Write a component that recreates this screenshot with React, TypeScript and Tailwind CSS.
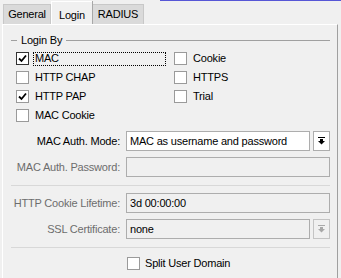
import React from 'react'

const Check = ({ checked, dark }: { checked?: boolean; dark?: boolean }) => (
    <span className={`flex h-[13px] w-[13px] shrink-0 items-center justify-center border bg-white ${dark ? 'border-[#333333]' : 'border-[#9a9a9a]'}`}>
        {checked && (
            <svg width="11" height="11" viewBox="0 0 11 11">
                <polyline points="2,5.5 4.5,8 9,2.5" fill="none" stroke="#000" strokeWidth="1.8" />
            </svg>
        )}
    </span>
)

const CheckRow = ({ label, checked, focus }: { label: string; checked?: boolean; focus?: boolean }) => (
    <div className="flex h-[19px] items-center gap-[4px]">
        <Check checked={checked} dark={focus} />
        {focus ? (
            <span className="flex h-[14px] w-[133px] items-center border border-dotted border-black pl-[1px]">{label}</span>
        ) : (
            <span className="pl-[2px]">{label}</span>
        )}
    </div>
)

const DropBtn = ({ disabled }: { disabled?: boolean }) => (
    <div className={`flex h-[20px] w-[17px] items-center justify-center border ${disabled ? 'border-[#c4c4c4]' : 'border-[#adadad] bg-white'}`}>
        <svg width="9" height="9" viewBox="0 0 9 9" fill={disabled ? '#a8a8a8' : '#000'}>
            <rect x="1" y="0" width="7" height="1" />
            <rect x="3" y="2" width="3" height="2" />
            <polygon points="1,4 8,4 4.5,7.5" />
        </svg>
    </div>
)

const Label = ({ text, disabled }: { text: string; disabled?: boolean }) => (
    <span className={`w-[109px] shrink-0 text-right ${disabled ? 'text-[#6d6d6d]' : 'text-black'}`}>{text}</span>
)

const App = () => {
    return (
        <div
            className="relative h-[278px] w-[341px] overflow-hidden bg-[#f0f0f0] text-[11px] tracking-[-0.2px] text-black"
            style={{ fontFamily: '"Liberation Sans", Arial, sans-serif' }}
        >
            <div className="absolute left-[160px] right-0 top-0 h-[1px] bg-[#5656d6]" />

            {/* tabs */}
            <div className="flex h-[24px] items-end pl-[3px]">
                <div className="flex h-[20px] w-[48px] items-center justify-center border border-b-0 border-[#c8c8c8] bg-[#dadada]">General</div>
                <div className="flex h-[23px] w-[41px] items-start justify-center border-l border-t border-white bg-[#f0f0f0] pt-[5px] shadow-[1px_0_0_#a8a8a8]">Login</div>
                <div className="ml-[1px] flex h-[20px] w-[51px] items-center justify-center border border-b-0 border-l-0 border-[#c8c8c8] bg-[#dadada]">RADIUS</div>
            </div>

            {/* panel */}
            <div className="ml-[2px] mr-[3px] h-[254px] border-l border-r border-t border-l-white border-r-[#a0a0a0] border-t-white pr-[7px] pl-[8px]">
                <div className="mt-[8px] flex h-[14px] items-center">
                    <span className="h-[1px] w-[6px] bg-[#a0a0a0]" />
                    <span className="px-[4px]">Login By</span>
                    <span className="h-[1px] flex-1 bg-[#a0a0a0]" />
                </div>

                <div className="mt-[2px] flex pl-[5px]">
                    <div className="w-[158px]">
                        <CheckRow label="MAC" checked focus />
                        <CheckRow label="HTTP CHAP" />
                        <CheckRow label="HTTP PAP" checked />
                        <CheckRow label="MAC Cookie" />
                    </div>
                    <div>
                        <CheckRow label="Cookie" />
                        <CheckRow label="HTTPS" />
                        <CheckRow label="Trial" />
                    </div>
                </div>

                <div className="mt-[6px] flex flex-col gap-[6px]">
                    <div className="flex items-center gap-[6px]">
                        <Label text="MAC Auth. Mode:" />
                        <div className="flex flex-1 gap-[3px]">
                            <div className="flex h-[20px] flex-1 items-center border border-[#adadad] bg-white pl-[3px]">MAC as username and password</div>
                            <DropBtn />
                        </div>
                    </div>
                    <div className="flex items-center gap-[6px]">
                        <Label text="MAC Auth. Password:" disabled />
                        <div className="h-[20px] flex-1 border border-[#adadad]" />
                    </div>
                </div>

                <div className="mt-[8px] h-[1px] bg-[#d8d8d8]" />

                <div className="mt-[7px] flex flex-col gap-[6px]">
                    <div className="flex items-center gap-[6px]">
                        <Label text="HTTP Cookie Lifetime:" disabled />
                        <div className="flex h-[20px] flex-1 items-center border border-[#adadad] pl-[3px]">3d 00:00:00</div>
                    </div>
                    <div className="flex items-center gap-[6px]">
                        <Label text="SSL Certificate:" disabled />
                        <div className="flex flex-1 gap-[3px]">
                            <div className="flex h-[20px] flex-1 items-center border border-[#adadad] pl-[3px]">none</div>
                            <DropBtn disabled />
                        </div>
                    </div>
                </div>

                <div className="mt-[8px] h-[1px] bg-[#d8d8d8]" />

                <div className="mt-[6px] flex h-[19px] items-center pl-[116px]">
                    <Check />
                    <span className="pl-[5px]">Split User Domain</span>
                </div>

                <div className="mt-[8px] h-[1px] bg-[#d8d8d8]" />
            </div>
        </div>
    )
}

export default App
